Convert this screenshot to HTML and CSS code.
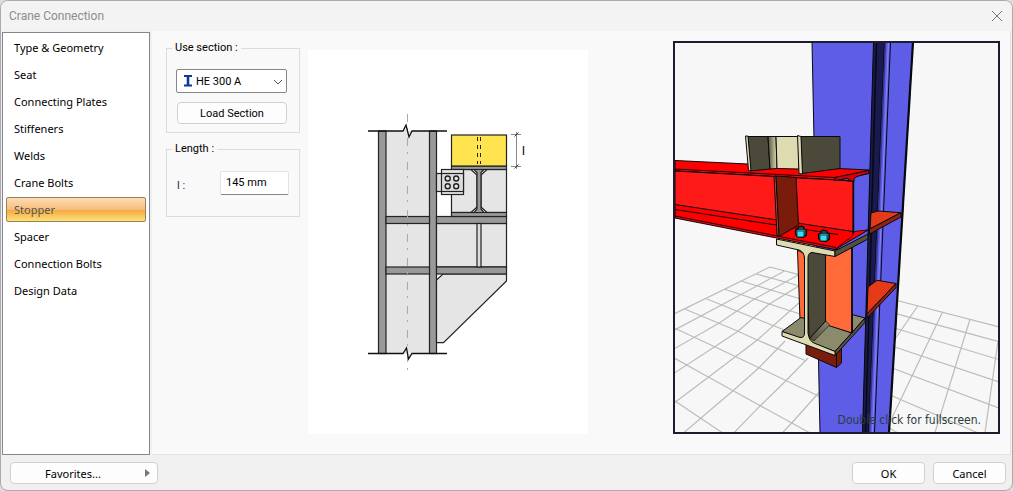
FILE: index.html
```html
<!DOCTYPE html>
<html lang="en">
<head>
    <meta charset="UTF-8">
    <meta name="viewport" content="width=device-width, initial-scale=1.0">
    <title>Crane Connection</title>
    <link rel="stylesheet" href="styles.css">
</head>
<body>

<div class="dialog">
    <header class="titlebar">
        <h1>Crane Connection</h1>
        <button class="close" aria-label="Close">
            <svg width="12" height="12" viewBox="0 0 12 12"><path d="M1 1L11 11M11 1L1 11" stroke="#777" fill="none"/></svg>
        </button>
    </header>

    <div class="main">
        <nav class="menu">
            <button>Type &amp; Geometry</button>
            <button>Seat</button>
            <button>Connecting Plates</button>
            <button>Stiffeners</button>
            <button>Welds</button>
            <button>Crane Bolts</button>
            <button class="selected">Stopper</button>
            <button>Spacer</button>
            <button>Connection Bolts</button>
            <button>Design Data</button>
        </nav>

        <main class="panel">
            <form class="settings">
                <fieldset class="section-group">
                    <legend>Use section :</legend>
                    <div class="combo">
                        <svg class="profile" width="10" height="12" viewBox="0 0 10 12"><path d="M1 0H9V2H6.300V9.500H9V11.500H1V9.500H3.700V2H1Z" fill="#0b3a9c"/></svg>
                        <select aria-label="Use section">
                            <option>HE 300 A</option>
                        </select>
                        <svg class="arrow" width="10" height="6" viewBox="0 0 10 6"><path d="M1 1L5 5L9 1" stroke="#555" fill="none"/></svg>
                    </div>
                    <button type="button" class="btn">Load Section</button>
                </fieldset>
                <fieldset class="length-group">
                    <legend>Length :</legend>
                    <div class="row">
                        <label for="length">l :</label>
                        <input type="text" id="length" value="145 mm">
                    </div>
                </fieldset>
            </form>

            <div class="drawing">
                <svg viewBox="308 50 280 384" role="img" aria-label="Section drawing">
                    <g stroke="#222" stroke-width="1.200">
                        <!-- column -->
                        <rect x="386" y="131" width="44" height="222.500" fill="#e5e5e5" stroke="none"/>
                        <rect x="378.500" y="131" width="7.500" height="222.500" fill="#999"/>
                        <rect x="429.500" y="131" width="7" height="222.500" fill="#999"/>
                        <!-- bracket -->
                        <rect x="436.500" y="223.500" width="70" height="43.500" fill="#e5e5e5"/>
                        <path d="M443 274H506.500V281L443.500 342.700H436.500V280Z" fill="#e5e5e5"/>
                        <rect x="386" y="216.500" width="43.500" height="7" fill="#999"/>
                        <rect x="436.500" y="216.500" width="70" height="7" fill="#999"/>
                        <rect x="386" y="267" width="43.500" height="7" fill="#999"/>
                        <rect x="436.500" y="267" width="70" height="7" fill="#999"/>
                        <rect x="477" y="223.500" width="4" height="43.500" fill="#ddd"/>
                        <!-- crane beam -->
                        <rect x="451.500" y="169.500" width="55" height="43" fill="#e5e5e5"/>
                        <rect x="451.500" y="166" width="55" height="3.500" fill="#999"/>
                        <rect x="451.500" y="212.500" width="55" height="4" fill="#999"/>
                        <path d="M471 169.500H487L481 175V207L487 212.500H471L477 207V175Z" fill="#fff"/>
                        <path d="M474 169.500H484L481 172.500V209L484 212.500H474L477 209V172.500Z" fill="#999"/>
                        <!-- stopper -->
                        <rect x="451.500" y="135" width="55" height="31" fill="#ffe34f"/>
                        <path d="M477.500 137V164M480.500 137V164" stroke-dasharray="4 4" stroke-width="1"/>
                        <!-- connecting plates -->
                        <rect x="441.500" y="169.500" width="22" height="25" fill="#e5e5e5"/>
                        <rect x="436.500" y="173.500" width="27" height="18" fill="#ddd"/>
                        <path d="M441.500 173.500V191.500"/>
                        <g fill="#e5e5e5" stroke-width="1.400">
                            <circle cx="447.700" cy="178.500" r="2.500"/>
                            <circle cx="456.200" cy="178.500" r="2.500"/>
                            <circle cx="447.700" cy="186.200" r="2.500"/>
                            <circle cx="456.200" cy="186.200" r="2.500"/>
                        </g>
                    </g>
                    <path d="M407.500 114V370" stroke="#aaa" stroke-dasharray="8 6 2 8"/>
                    <path d="M403 131L406 125L409 137L412 131L403 131Z M403 353.500L406.500 348L408.500 358.500L412 353.500Z" fill="#e5e5e5"/>
                    <path d="M368 131H403L406 125L409 137L412 131H447M368 353.500H403L406.500 348L408.500 359L412 353.500H447" fill="none" stroke="#111" stroke-width="1.300"/>
                    <!-- dimension -->
                    <path d="M511 134.500H521M511 166.500H521M516.500 132V169" stroke="#888"/>
                    <path d="M514.500 136.500L518.500 132.500M514.500 168.500L518.500 164.500" stroke="#444"/>
                    <text class="dim" x="522" y="155">l</text>
                </svg>
            </div>

            <div class="view">
                <svg viewBox="675 43 323 389" role="img" aria-label="3D view">
                    <defs>
                        <linearGradient id="fillet"><stop offset="0" stop-color="#54523f"/><stop offset="1" stop-color="#dedbb0"/></linearGradient>
                        <linearGradient id="round" x1="0" y1="1" x2="1" y2="0"><stop offset="0" stop-color="#4b4a3a"/><stop offset="1" stop-color="#8b8a6c"/></linearGradient>
                    </defs>
                    <!-- floor grid -->
                    <g fill="none" stroke="#b9bdb8" stroke-width="1.200">
                        <path d="M770 267L798 274.300M756.300 274L800 286M741.700 281.300L800 298.700M724.700 289.300L800 314M706.300 298.700L785 330.300M685.300 309.300L738 331.300L757.300 340L806.300 361M674 328L714.700 346.700L759 367.700L819 396.300M674 358L708.300 377L760.300 405.700L809 432.500M674 400.300L700.300 418L722 432.500"/>
                        <path d="M770 267L674 314M784 271.300L722 304.700L674 330.300M798.300 275L754 299.300L719.300 323L674 349M800 285.300L769 304.300L738 331.300L714.700 346.700L674 373.300M800 302L757.300 340L708.700 377L674 403M785 341L759 367.700L733 390.700L684 432.500M808 358L785.700 381L760.300 405.700L734.300 432.500M819 392.500L791.700 423L782.700 432.500"/>
                        <path d="M897 300.500L998 326.700M896 313.700L998 341.300M895 328.300L998 359.300M894 346.700L998 381.700M892 368L998 407.700M890 395L977 432.500M889 428L897 432.500"/>
                        <path d="M917.700 306L893 342M942.700 311.700L890 422M970 319.300L935 432.500M998 341L985 432.500"/>
                    </g>
                    <g stroke="#08080f" stroke-width="1" stroke-linejoin="round">
                        <!-- column -->
                        <path d="M812 42L874 42L863 433L820 433Z" fill="#5d5de8"/>
                        <path d="M884 42L913 42L889 433L868 433Z" fill="#5d5de8"/>
                        <path d="M873.500 42H884.500L868.500 433H862.500Z" fill="#1a1a4e"/>
                        <path d="M876.500 42L865.500 433" stroke-width="1.500"/>
                        <path d="M885.500 42L869.500 433" stroke="#34348e" stroke-width="1.500"/>
                        <path d="M888.500 42L872.500 433" stroke="#8686ee"/>
                        <path d="M890.500 42L874.500 433" fill="none"/>
                        <path d="M913 42L889 433" stroke-width="2.200"/>
                        <!-- plates behind the column web -->
                        <path d="M871 213L878 211L901 212.700L870 229Z" fill="#e53a18"/>
                        <path d="M901 212.700V217L869.500 234V229Z" fill="#8d2410"/>
                        <path d="M868 287L877 280.300L896 283.500L867 314Z" fill="#e53a18"/>
                        <path d="M896 283.500V287.700L867 318V314Z" fill="#8d2410"/>
                        <!-- bracket -->
                        <path d="M806 343V354L836.500 367.500L841.500 363V345Z" fill="#7a1c0c"/>
                        <path d="M836.500 367.500V352"/>
                        <path d="M797.500 250L804.500 254V320H800Z" fill="#ff6a38"/>
                        <path d="M782 331.500L801 317.500L829 325L852 333V314.500L865 318L835 351.500Z" fill="#8b8a6c"/>
                        <path d="M865 318V322.500L835 355.500V351.500Z" fill="#54523f"/>
                        <path d="M825 252L852 246V333L828.500 325.500L825 321Z" fill="#ff6a38"/>
                        <path d="M809.500 338L826 321L829.500 325L814 341Z" fill="url(#round)" stroke-width=".6"/>
                        <path d="M807 252H825.500V321L809 339Z" fill="#4b4a3a"/>
                        <path d="M852 246V333" stroke-width="1.600"/>
                        <path d="M782 331.500L800 337.500Q804.500 338 804.500 333V258Q804 251.500 799 250L776.500 245V239L835 251V256.500L812 252.500Q808 253 808 258V333Q809 341 814 343L835 351.500V355.500L782 336Z" fill="#dedbb0"/>
                        <path d="M835 251L868 234V239L835 256.500Z" fill="#54523f"/>
                        <!-- crane beam -->
                        <path d="M675 160.500L748 164L869 170L835 180L675 171Z" fill="#f00"/>
                        <path d="M675 171L835 180L853 182V234L868 230L835 249.500L675 218Z" fill="#f00"/>
                        <path d="M675 171L853 181V231.500L675 204.500Z" fill="#ff1a1a"/>
                        <path d="M675 209.500L838 234.500M675 216L836 247.500M675 169L835 177.500L869 170.500M835 177.500V180.500L869 173.500V170M841 180L853 181.500" fill="none"/>
                        <path d="M835 177.500L869 170.500V173L857 176.500Q853.500 177.500 853.500 182L847 178.500L835 180.500Z" fill="#d90000"/>
                        <path d="M853.500 232Q855 231 868 230L835 249.500L846 240.500Q853 238 853.500 232Z" fill="#f00" stroke-width=".8"/>
                        <path d="M853.500 180V233" stroke-width="1.400"/>
                        <!-- stiffener -->
                        <path d="M774 176L776 176L779.500 236.500L777 235.500Z" fill="#bd4526"/>
                        <path d="M776 176L796 177.500L798.500 225L779 236.500Z" fill="#7a1c0c"/>
                        <!-- stopper -->
                        <path d="M748 136.500H768L770 169L750.500 171Z" fill="#4b4a3a"/>
                        <path d="M768 136.500H776L777 168.500L770 169Z" fill="url(#fillet)"/>
                        <path d="M776 136.500H799V169L777 168.500Z" fill="#dedbb0"/>
                        <path d="M745.500 136H748L751 171L748.500 170.500Z" fill="#dedbb0"/>
                        <path d="M801 136.500H840V168.500L802 173.500Z" fill="#4b4a3a"/>
                        <path d="M797.500 135.500L801 136.500L802.500 174L799 173.500Z" fill="#dedbb0"/>
                        <!-- bolts -->
                        <g id="bolt" stroke-width="1.200">
                            <path d="M798 229V227L800.500 226L804 227V229L806.500 230V235L803 237.500L797.500 237L795.500 234.500V230Z" fill="#184850"/>
                            <path d="M797.500 231.500H803.500V236.500H797.500Z" fill="#35dff2" stroke="none"/>
                            <path d="M797 230.500H805" stroke="#2c8793"/>
                        </g>
                        <use href="#bolt" x="23" y="4"/>
                    </g>
                </svg>
                <span class="hint">Double click for fullscreen.</span>
            </div>
        </main>
    </div>

    <footer class="footer">
        <button class="btn favorites">Favorites...</button>
        <button class="btn">OK</button>
        <button class="btn">Cancel</button>
    </footer>
</div>

</body>
</html>
```

FILE: styles.css
```css
* {
    box-sizing: border-box;
}
body {
    margin: 0;
    background: #dcdcdc;
    font-family: "Noto Sans", Tahoma, sans-serif;
    font-size: 11px;
    color: #000;
}
button, input, select {
    font: inherit;
    color: inherit;
}
.dialog {
    display: flex;
    flex-direction: column;
    min-height: 100vh;
    border: 1px solid #aaa;
    border-radius: 8px;
    background: #f0f0f0;
    overflow: hidden;
}
.titlebar {
    display: flex;
    align-items: center;
    justify-content: space-between;
    height: 30px;
    padding: 0 9px 0 8px;
    background: #f3f3f3;
}
.titlebar h1 {
    margin: 0;
    font-family: Roboto, sans-serif;
    font-size: 12px;
    font-weight: normal;
    color: #8c8c8c;
}
.close {
    display: flex;
    padding: 0;
    border: none;
    background: none;
}
.main {
    display: flex;
    flex: 1;
    gap: 2px;
    padding: 0 1px;
}
.menu {
    display: flex;
    flex-direction: column;
    gap: 2px;
    width: 148px;
    margin-top: 1px;
    padding: 2px 3px;
    border: 1px solid #828790;
    background: #fff;
}
.menu button {
    height: 25px;
    padding: 0 7px;
    border: 1px solid transparent;
    border-radius: 2px;
    background: none;
    text-align: left;
}
.menu .selected {
    border-color: #a08050;
    background: linear-gradient(#fbdcb8, #f8bd78 50%, #f5a840 51%, #fde07a);
    color: #555;
}
.panel {
    display: flex;
    flex: 1;
    align-items: flex-start;
    padding: 10px 10px 20px 14px;
    border-right: 1px solid #e3e3e3;
    border-bottom: 1px solid #e3e3e3;
    background: #f9f9f9;
}
.settings {
    display: flex;
    flex-direction: column;
    gap: 9px;
    width: 134px;
    margin-right: 8px;
    font-family: Roboto, Tahoma, sans-serif;
}
fieldset {
    margin: 0;
    padding: 0 10px;
    border: 1px solid #dcdcdc;
}
legend {
    margin-left: -5px;
    padding: 0 3px;
    line-height: 14px;
}
.section-group {
    display: flex;
    flex-direction: column;
    height: 92px;
}
.combo {
    position: relative;
    margin: 14px 2px 9px -1px;
}
.combo select {
    display: block;
    width: 111px;
    height: 24px;
    padding: 0 18px 0 19px;
    border: 1px solid #868686;
    border-radius: 2px;
    background: #fff;
    appearance: none;
}
.profile {
    position: absolute;
    top: 6px;
    left: 7px;
}
.arrow {
    position: absolute;
    top: 10px;
    right: 4px;
}
.btn {
    height: 22px;
    padding: 0;
    border: 1px solid #d0d0d0;
    border-radius: 4px;
    background: #fdfdfd;
}
.section-group .btn {
    width: 110px;
}
.length-group {
    height: 75px;
}
.row {
    display: flex;
    align-items: center;
    justify-content: space-between;
    margin-top: 15px;
}
.row label {
    padding-top: 4px;
    color: #1a2a5a;
}
.row input {
    width: 69px;
    height: 24px;
    padding: 0 5px 2px;
    border: 1px solid #e3e3e3;
    border-bottom-color: #868686;
    border-radius: 2px;
    background: #fff;
}
.drawing {
    width: 280px;
    margin-top: 9px;
    background: #fff;
}
.drawing svg, .view svg {
    display: block;
    width: 100%;
}
.dim {
    font-family: "Liberation Sans", sans-serif;
    font-size: 13px;
}
.view {
    position: relative;
    width: 327px;
    margin-left: auto;
    border: 2px solid #1c1c30;
    background: #f7f7f7;
}
.hint {
    position: absolute;
    right: 17px;
    bottom: 5px;
    font-family: "DejaVu Sans Condensed", Tahoma, sans-serif;
    font-size: 12px;
    color: #2c3c40;
}
.footer {
    display: flex;
    gap: 8px;
    padding: 7px 6px 6px 9px;
}
.footer .btn {
    width: 73px;
}
.footer .favorites {
    position: relative;
    width: 148px;
    margin-right: auto;
    padding-right: 22px;
}
.favorites::after {
    content: "";
    position: absolute;
    top: 6px;
    right: 7px;
    border: 4px solid transparent;
    border-left: 5px solid #777;
    border-right: none;
}
```
